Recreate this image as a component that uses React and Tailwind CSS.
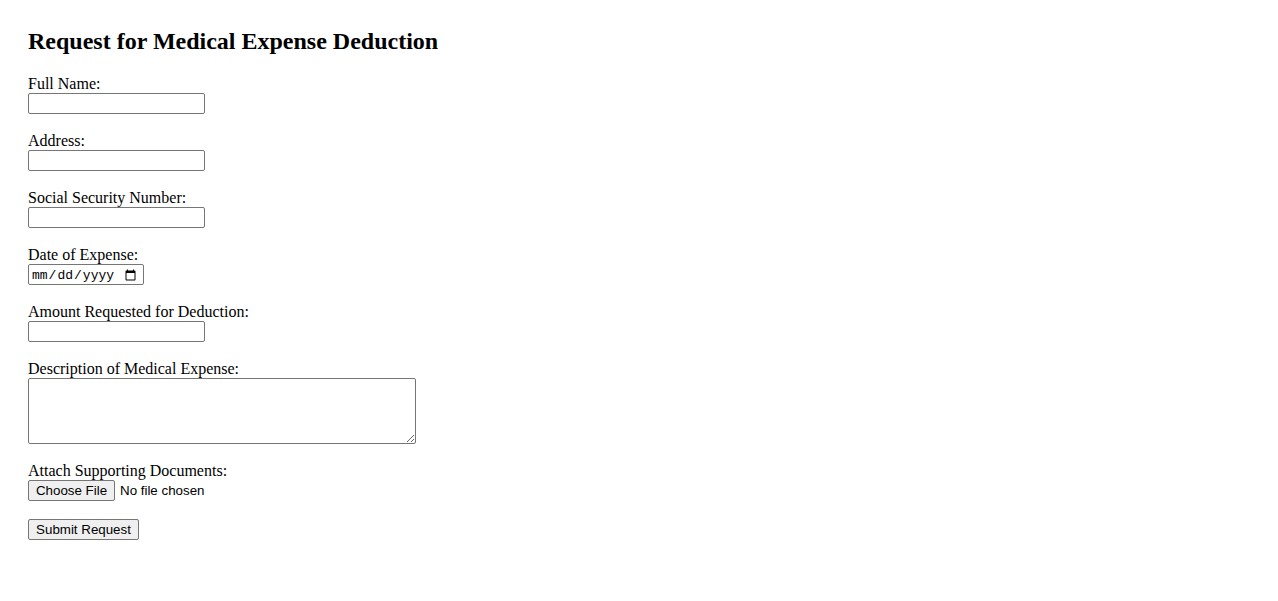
import React from "react";

const fields = [
  { label: "Full Name:", type: "text" },
  { label: "Address:", type: "text" },
  { label: "Social Security Number:", type: "text" },
];

export default function App() {
  const inputCls =
    "block h-[21px] w-[177px] rounded-[2px] border border-[#767676] bg-white px-[2px] text-[13.33px] font-['Liberation_Sans',sans-serif]";
  const btnCls =
    "h-[21px] rounded-[2px] border border-[#767676] bg-[#efefef] px-[6px] text-[13.33px] leading-[17px] text-black font-['Liberation_Sans',sans-serif]";

  return (
    <div className="min-h-screen bg-white pl-[28px] pt-[27px] text-black font-['Liberation_Serif',serif] text-[16px]">
      <h2 className="text-[24px] font-bold leading-[28px] mb-[20px]">
        Request for Medical Expense Deduction
      </h2>

      <form onSubmit={(e) => e.preventDefault()}>
        {fields.map((f) => (
          <div key={f.label} className="mb-[18px]">
            <label className="block leading-[18px]">{f.label}</label>
            <input type={f.type} className={inputCls} />
          </div>
        ))}

        {/* Date */}
        <div className="mb-[18px]">
          <label className="block leading-[18px]">Date of Expense:</label>
          <input
            type="date"
            className="block h-[21px] w-[116px] rounded-[2px] border border-[#767676] bg-white pl-[2px] pr-[4px] pt-[2px] text-[13px] font-['Liberation_Mono',monospace]"
          />
        </div>

        <div className="mb-[18px]">
          <label className="block leading-[18px]">
            Amount Requested for Deduction:
          </label>
          <input type="text" className={inputCls} />
        </div>

        <div className="mb-[18px]">
          <label className="block leading-[18px]">
            Description of Medical Expense:
          </label>
          <textarea className="block h-[66px] w-[388px] rounded-[2px] border border-[#767676] bg-white p-[2px] text-[13.33px] font-['Liberation_Mono',monospace]" />
        </div>

        <div className="mb-[18px]">
          <label className="block leading-[18px]">
            Attach Supporting Documents:
          </label>
          <div className="flex items-center gap-[5px] h-[21px]">
            <button type="button" className={btnCls + " w-[87px]"}>
              Choose File
            </button>
            <span className="text-[13.33px] font-['Liberation_Sans',sans-serif]">
              No file chosen
            </span>
          </div>
        </div>

        <button type="submit" className={btnCls + " block w-[111px]"}>
          Submit Request
        </button>
      </form>
    </div>
  );
}
